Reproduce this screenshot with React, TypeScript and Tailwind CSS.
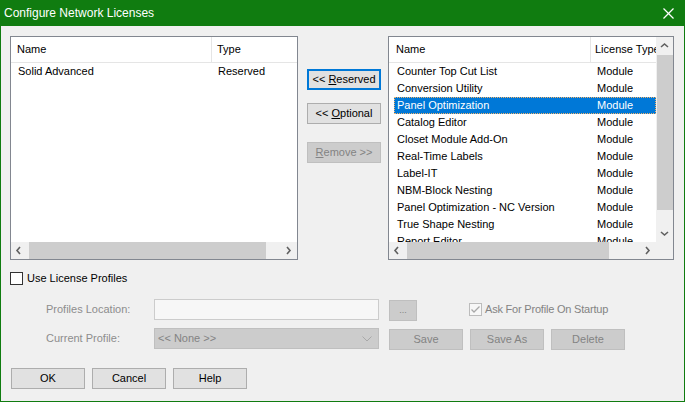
import React from "react";

const Chev = ({ dir, color = "#606060" }: { dir: "l" | "r" | "u" | "d"; color?: string }) => {
  const pts: Record<string, string> = {
    l: "5,1 2,4.5 5,8",
    r: "3,1 6,4.5 3,8",
    u: "1,6 4.5,3 8,6",
    d: "1,3 4.5,6 8,3",
  };
  return (
    <svg width="9" height="9" viewBox="0 0 9 9">
      <polyline points={pts[dir]} fill="none" stroke={color} strokeWidth="1.6" />
    </svg>
  );
};

const rightRows = [
  "Counter Top Cut List",
  "Conversion Utility",
  "Panel Optimization",
  "Catalog Editor",
  "Closet Module Add-On",
  "Real-Time Labels",
  "Label-IT",
  "NBM-Block Nesting",
  "Panel Optimization - NC Version",
  "True Shape Nesting",
  "Report Editor",
];

const Btn = ({ children, cls = "" }: { children: React.ReactNode; cls?: string }) => (
  <div className={`h-[21px] w-[74px] flex items-center justify-center bg-[#e1e1e1] border border-[#adadad] text-black ${cls}`}>
    {children}
  </div>
);

const DisBtn = ({ children, cls = "" }: { children: React.ReactNode; cls?: string }) => (
  <div className={`h-[21px] flex items-center justify-center bg-[#cccccc] border border-[#bfbfbf] text-[#838383] ${cls}`}>
    {children}
  </div>
);

export default function App() {
  return (
    <div className="w-[685px] h-[402px] bg-[#f0f0f0] border-x border-b border-[#107c10] font-['Liberation_Sans',Arial,sans-serif] text-[11px] text-black flex flex-col overflow-hidden">
      {/* Title bar */}
      <div className="h-[26px] shrink-0 bg-[#107c10] flex items-center justify-between pl-[3px] pr-[10px] text-white text-[12px]">
        <span>Configure Network Licenses</span>
        <svg width="11" height="11" viewBox="0 0 11 11">
          <line x1="0.5" y1="0.5" x2="10.5" y2="10.5" stroke="white" strokeWidth="1.2" />
          <line x1="10.5" y1="0.5" x2="0.5" y2="10.5" stroke="white" strokeWidth="1.2" />
        </svg>
      </div>

      <div className="pl-[9px] pt-[10px] flex flex-col">
        {/* Top row */}
        <div className="flex h-[224px]">
          {/* Left list */}
          <div className="w-[288px] h-full border border-[#828790] bg-white flex flex-col">
            <div className="h-[26px] flex border-b border-[#e5e5e5] shrink-0">
              <div className="w-[201px] pl-[6px] border-r border-[#e5e5e5] flex items-center">Name</div>
              <div className="pl-[5px] flex items-center">Type</div>
            </div>
            <div className="flex-1">
              <div className="h-[17px] flex items-center">
                <div className="w-[201px] pl-[7px]">Solid Advanced</div>
                <div className="pl-[6px]">Reserved</div>
              </div>
            </div>
            <div className="h-[17px] shrink-0 flex bg-[#f0f0f0]">
              <div className="w-[17px] flex items-center justify-center"><Chev dir="l" /></div>
              <div className="ml-[1px] w-[237px] bg-[#cdcdcd]" />
              <div className="flex-1" />
              <div className="w-[17px] flex items-center justify-center"><Chev dir="r" /></div>
            </div>
          </div>

          {/* Middle buttons */}
          <div className="ml-[9px] w-[74px] flex flex-col">
            <div className="mt-[33px] h-[21px] w-[74px] flex items-center justify-center bg-[#e1e1e1] border-2 border-[#0078d7]">
              &lt;&lt;&nbsp;<span className="underline">R</span>eserved
            </div>
            <Btn cls="mt-[13px]">
              &lt;&lt;&nbsp;<span className="underline">O</span>ptional
            </Btn>
            <DisBtn cls="mt-[18px] w-[74px]">
              <span className="underline">R</span>emove &gt;&gt;
            </DisBtn>
          </div>

          {/* Right list */}
          <div className="ml-[7px] w-[286px] h-full border border-[#828790] bg-white flex flex-col">
            <div className="flex-1 flex min-h-0">
              <div className="flex-1 flex flex-col overflow-hidden">
                <div className="h-[26px] flex border-b border-[#e5e5e5] shrink-0">
                  <div className="w-[202px] pl-[7px] border-r border-[#e5e5e5] flex items-center shrink-0">Name</div>
                  <div className="pl-[4px] flex items-center whitespace-nowrap">License Type</div>
                </div>
                <div className="flex-1 overflow-hidden">
                  {rightRows.map((r, i) => (
                    <div
                      key={r}
                      className={
                        i === 2
                          ? "h-[17px] ml-[5px] flex items-center bg-[#0078d7] text-white outline outline-1 outline-dotted outline-[#f2b36b] -outline-offset-1"
                          : "h-[17px] ml-[5px] flex items-center"
                      }
                    >
                      <div className="w-[197px] pl-[3px] whitespace-nowrap shrink-0">{r}</div>
                      <div className="pl-[6px]">Module</div>
                    </div>
                  ))}
                </div>
              </div>
              <div className="w-[17px] bg-[#f0f0f0] flex flex-col shrink-0">
                <div className="h-[17px] flex items-center justify-center"><Chev dir="u" /></div>
                <div className="ml-[1px] mt-[1px] h-[155px] bg-[#cdcdcd]" />
                <div className="flex-1" />
                <div className="h-[17px] flex items-center justify-center"><Chev dir="d" /></div>
              </div>
            </div>
            <div className="h-[17px] shrink-0 flex">
              <div className="flex-1 flex bg-[#f0f0f0]">
                <div className="w-[17px] flex items-center justify-center"><Chev dir="l" /></div>
                <div className="ml-[1px] w-[202px] bg-[#cdcdcd]" />
                <div className="flex-1" />
                <div className="w-[17px] flex items-center justify-center"><Chev dir="r" /></div>
              </div>
              <div className="w-[17px] bg-[#f0f0f0]" />
            </div>
          </div>
        </div>

        {/* Use License Profiles */}
        <div className="mt-[12px] h-[13px] flex items-center">
          <div className="w-[13px] h-[13px] border border-[#333333] bg-white" />
          <span className="ml-[4px]">Use License Profiles</span>
        </div>

        {/* Profiles Location */}
        <div className="mt-[14px] h-[21px] flex items-center">
          <div className="w-[144px] pl-[36px] text-[#8d8d8d]">Profiles Location:</div>
          <div className="w-[225px] h-[21px] border border-[#cccccc] bg-[#f7f7f7]" />
          <DisBtn cls="ml-[10px] w-[28px] mt-[2px]">
            <span className="text-[9px] leading-none">...</span>
          </DisBtn>
          <div className="ml-[52px] w-[13px] h-[13px] border border-[#bcbcbc] bg-[#f7f7f7] flex items-center justify-center">
            <svg width="11" height="11" viewBox="0 0 11 11">
              <polyline points="1.5,5.5 4,8 9.5,2.5" fill="none" stroke="#a8a8a8" strokeWidth="1.3" />
            </svg>
          </div>
          <span className="ml-[3px] text-[#838383] tracking-[-0.2px]">Ask For Profile On Startup</span>
        </div>

        {/* Current Profile */}
        <div className="mt-[8px] h-[21px] flex items-center">
          <div className="w-[144px] pl-[36px] text-[#8d8d8d]">Current Profile:</div>
          <div className="w-[225px] h-[21px] border border-[#bfbfbf] bg-[#cccccc] flex items-center justify-between pl-[3px] pr-[6px] text-[#838383]">
            <span>&lt;&lt; None &gt;&gt;</span>
            <svg width="10" height="6" viewBox="0 0 10 6">
              <polyline points="0.5,0.5 5,5 9.5,0.5" fill="none" stroke="#a8a8a8" strokeWidth="1" />
            </svg>
          </div>
          <DisBtn cls="ml-[10px] w-[74px] mt-[1px]">Save</DisBtn>
          <DisBtn cls="ml-[7px] w-[74px] mt-[1px]">Save As</DisBtn>
          <DisBtn cls="ml-[7px] w-[74px] mt-[1px]">Delete</DisBtn>
        </div>

        {/* Bottom buttons */}
        <div className="mt-[19px] flex">
          <Btn cls="ml-[1px]">OK</Btn>
          <Btn cls="ml-[7px]">Cancel</Btn>
          <Btn cls="ml-[7px]">Help</Btn>
        </div>
      </div>
    </div>
  );
}
